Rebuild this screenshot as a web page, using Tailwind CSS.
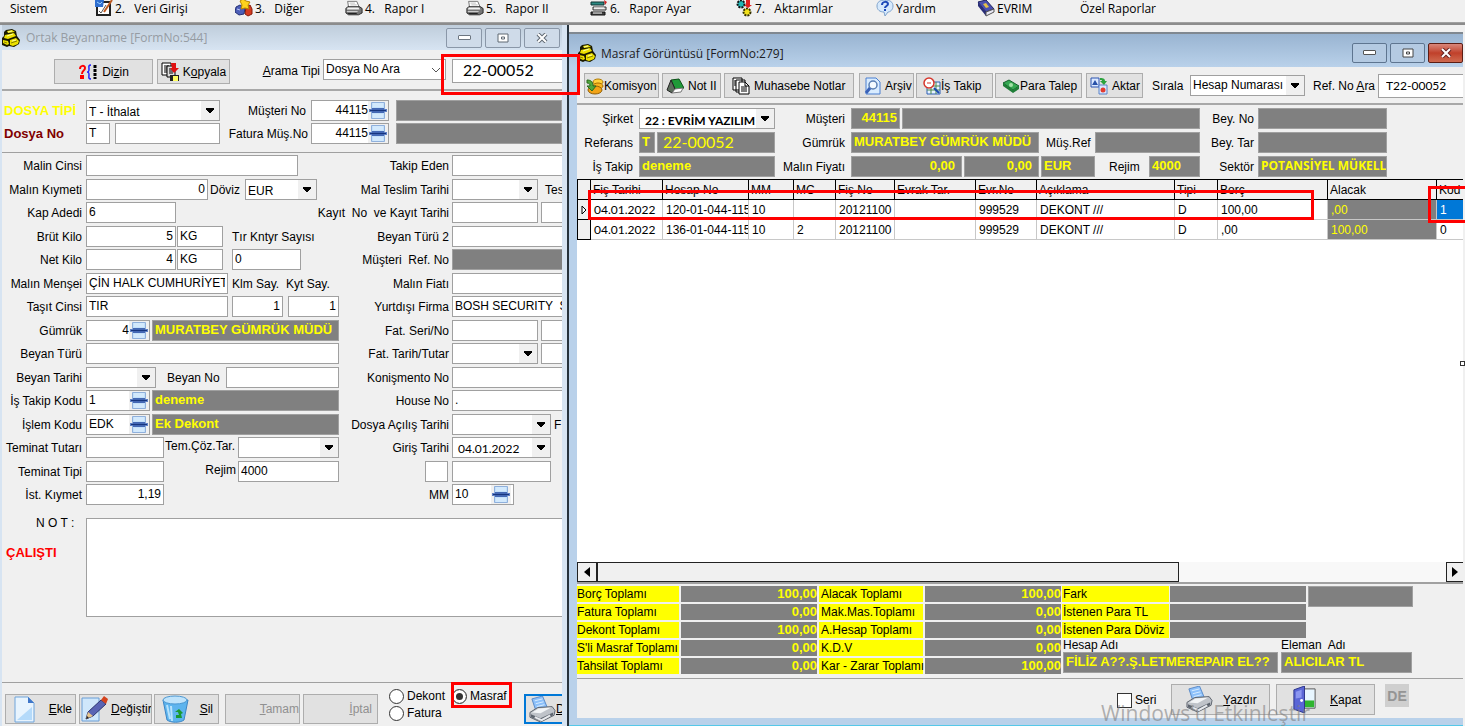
<!DOCTYPE html>
<html lang="tr">
<head>
    <meta charset="UTF-8">
    <meta name="viewport" content="width=device-width, initial-scale=1.0">
    <title>Masraf Görüntüsü</title>
    <script src="https://cdn.jsdelivr.net/npm/@tailwindcss/browser@4"></script>
</head>
<!-- fld: white box, dk: grey read-only box, btn: flat button, row: form line -->
<body class="relative flex h-screen flex-col overflow-hidden bg-[#f0f0f0] font-['Liberation_Sans',Arial,sans-serif] text-xs whitespace-nowrap text-black
    [&_.fld]:h-[21px] [&_.fld]:shrink-0 [&_.fld]:border [&_.fld]:border-[#a0a0a0] [&_.fld]:bg-white [&_input.fld]:px-[2px] [&_input.fld]:pb-[2px]
    [&_.dk]:h-[21px] [&_.dk]:min-w-0 [&_.dk]:border [&_.dk]:border-[#a0a0a0] [&_.dk]:bg-[#808080] [&_.dk]:px-[2px] [&_.dk]:pb-[2px] [&_.dk]:text-[13px] [&_.dk]:font-bold [&_.dk]:text-[#ffff00]
    [&_.btn]:flex [&_.btn]:shrink-0 [&_.btn]:items-center [&_.btn]:overflow-hidden [&_.btn]:border [&_.btn]:border-[#adadad] [&_.btn]:bg-[#e1e1e1]
    [&_.row]:flex [&_.row]:h-[24px] [&_.row]:items-start [&_.row]:leading-[22px] [&_.row:nth-child(even)]:h-[23px]
    [&_select]:min-w-0 [&_select]:flex-1 [&_select]:appearance-none [&_select]:pb-[2px] [&_select]:pl-[2px] [&_select]:outline-none">

    <svg class="hidden">
        <symbol id="arrow" viewBox="0 0 18 19"><path d="M0 0h18v19H0z" fill="#f0f0f0"/><path d="M5 7h8v2h-1v1h-1v1h-1v1H8v-1H7v-1H6V9H5z" fill="#000"/></symbol>
        <symbol id="spin" viewBox="0 0 20 19"><path d="M0 0h20v19H0z" fill="#f0f0f0"/><path d="M3.500 1.500h13v16h-13z" fill="#c3e0fa" stroke="#8fb0dc"/><path d="M5 3h10M5 5h10M5 14h10M5 16h10" stroke="#e2f2ff"/><path d="M1 8h18v3H1z" fill="#5f80c4"/><path d="M4 7h12v5H4z" fill="#4468b4"/><path d="M2 9h16v1H2z" fill="#16357e"/></symbol>
        <symbol id="app" viewBox="0 0 18 18"><path d="M4 1l6-1 4 2 1 5 3 4-1 4-5 3-5-1-2 1-5-2V9l2-2V3z" fill="#1a1a00"/><path d="M5 2l5-1 3 2-7 1zM3 6l9-2 2 3-8 3-4-1zM1 11l5 1 1 3-2 1-4-2zM8 11l6-2 3 3-1 3-5 2-3-1z" fill="#ece100"/><path d="M6 3l4-1M5 7l6-2M10 12l4-1" stroke="#ffff9a"/><path d="M9 14l6-2M2 13l3 1" stroke="#8a8200"/></symbol>
        <symbol id="printer" viewBox="0 0 20 18"><path d="M4 8L3 1h10l3 7z" fill="#fff" stroke="#666"/><path d="M5 3h6M6 5h7" stroke="#bbb"/><path d="M1 9l2-2h13l3 2v5l-4 2H4l-3-2z" fill="#777" stroke="#222"/><path d="M3 8h12l1 2H2z" fill="#f4f4f4"/><path d="M2 12h12v1H2z" fill="#e8e8e8"/><path d="M3 14h10v1H3z" fill="#222"/></symbol>
        <symbol id="bigprinter" viewBox="0 0 28 28"><path d="M7 15L3 3l11-3 5 12z" fill="#8cc0fa" stroke="#5b8ac8"/><path d="M6 5l8-2M7 8l8-2M8 11l8-2" stroke="#d8ecff"/><path d="M1 17l8-5 15-1 3 4-1 5-14 7L1 22z" fill="#bfc3c9" stroke="#5c626b"/><path d="M3 17l7-4 13-1-11 6z" fill="#f2f4f6"/><path d="M2 19l10 4 13-6v3l-13 6L2 22z" fill="#5e656f"/><path d="M6 22l7 3 9-5" stroke="#e8eaee" fill="none" stroke-width="2"/></symbol>
    </svg>

    <!-- Main menu -->
    <nav class="flex h-[23px] shrink-0 border-b border-[#a0a0a0] pl-[10px] font-['Open_Sans','Noto_Sans',sans-serif] leading-[18px] [&_a]:flex [&_a]:shrink-0 [&_a]:gap-[2px] [&_pre]:font-[inherit] [&_svg]:h-[17px] [&_svg]:w-[18px] [&_svg]:shrink-0">
        <a href="#" class="w-[85px]">Sistem</a>
        <a href="#" class="w-[140px]"><svg viewBox="0 0 18 17"><path d="M2 2h13v13H2z" fill="#fff" stroke="#222" stroke-width="2"/><path d="M0 0h9l-1 7H0z" fill="#2f6fd0"/><path d="M2 2l3 2 2-2" stroke="#9ad0ff" fill="none"/><path d="M4 11l2 2 5-8" stroke="#555" fill="none"/><path d="M17 0L9 12" stroke="#c05a20" stroke-width="2"/></svg><pre>2.   Veri Girişi</pre></a>
        <a href="#" class="w-[110px]"><svg viewBox="0 0 18 17"><path d="M1 7l4-2 5 3-1 6-5 1-4-3z" fill="#4d5fb8" stroke="#232f75"/><path d="M11 7l4-2 2 4v5l-4 2-3-2z" fill="#d63b20" stroke="#861a0a"/><path d="M5 1l3-2 3 2 4 1-2 3 1 4-4-1-4 1 1-4z" fill="#ffd21c" stroke="#b98500"/><path d="M2 9l3 1" stroke="#b9c4f5"/></svg><pre>3.   Diğer</pre></a>
        <a href="#" class="w-[121px]"><svg viewBox="0 0 20 18"><use href="#printer"/></svg><pre>4.   Rapor I</pre></a>
        <a href="#" class="w-[124px]"><svg viewBox="0 0 20 18"><use href="#printer"/></svg><pre>5.   Rapor II</pre></a>
        <a href="#" class="w-[145px]"><svg viewBox="0 0 18 17"><path d="M1 2h13v3H1z" fill="#2c8a83" stroke="#133"/><path d="M3 7h13v3H3z" fill="#ddd" stroke="#333"/><path d="M1 12h14v3H1z" fill="#444" stroke="#111"/><path d="M14 0l3 2-2 3" fill="#c22"/><path d="M4 8h10M3 13h9" stroke="#fff"/></svg><pre>6.   Rapor Ayar</pre></a>
        <a href="#" class="w-[141px]"><svg viewBox="0 0 18 17"><circle cx="6" cy="4" r="3.500" fill="#22b5b5" stroke="#111" stroke-dasharray="2 1" stroke-width="2"/><circle cx="12" cy="12" r="3.500" fill="#f2e11b" stroke="#332f00" stroke-dasharray="2 1" stroke-width="2"/><path d="M11 0h4v5h2l-4 3-4-3h2z" fill="#e02020"/></svg><pre>7.   Aktarımlar</pre></a>
        <a href="#" class="w-[101px]"><svg viewBox="0 0 18 17"><path d="M9 0c5 0 8 2 8 6s-3 6-5 6l-3 4-1-4C4 12 1 10 1 6s3-6 8-6z" fill="#d6e9fc" stroke="#7fa3cc"/><path d="M6 5c0-4 6-4 6-1 0 2-3 2-3 4" stroke="#1c49b8" stroke-width="2" fill="none"/><path d="M8 9h2v2H8z" fill="#1c49b8"/></svg>Yardım</a>
        <a href="#" class="w-[103px]"><svg viewBox="0 0 18 17"><path d="M1 2l8-2 8 9-8 3z" fill="#4a50b0" stroke="#20245e"/><path d="M1 2l8 10v4L1 6z" fill="#292e78"/><path d="M9 12l8-3v3l-8 4z" fill="#e8e8f4" stroke="#555"/><path d="M6 4l3-1 3 4-3 1z" fill="#e3c04a"/></svg>EVRIM</a>
        <a href="#">Özel Raporlar</a>
    </nav>

    <main class="flex min-h-0 flex-1 border-t-2 border-[#8c8c8c]">
        <!-- Ortak Beyanname -->
        <section class="flex w-[569px] shrink-0 flex-col border-r-2 border-[#26323c] bg-[#d7e4f2] pr-[5px] pl-[2px]">
            <header class="flex h-[25px] shrink-0 items-center gap-[3px] bg-linear-to-b from-[#bfcddb] to-[#d7e4f2]">
                <svg class="size-[18px]"><use href="#app"/></svg>
                <h1 class="flex-1 pl-[3px] font-['Open_Sans','Noto_Sans',sans-serif] text-[#969ca3]">Ortak Beyanname [FormNo:544]</h1>
                <button aria-label="Simge durumuna küçült" class="grid h-[20px] w-[36px] place-items-center rounded-[2px] border border-[#8a97a8] bg-[#cfdbe9]"><span class="h-[5px] w-[13px] rounded-[1px] border border-[#6d7681] bg-white"></span></button>
                <button aria-label="Ekranı kapla" class="grid h-[20px] w-[36px] place-items-center rounded-[2px] border border-[#8a97a8] bg-[#cfdbe9]"><svg class="h-[10px] w-[12px]" viewBox="0 0 12 10"><path d="M1 1h10v8H1z" fill="#fff" stroke="#5f6873"/><path d="M4.500 4h3v2h-3z" fill="#fff" stroke="#5f6873"/></svg></button>
                <button aria-label="Kapat" class="mr-[2px] grid h-[20px] w-[36px] place-items-center rounded-[2px] border border-[#8a97a8] bg-[#cfdbe9]"><svg class="h-[10px] w-[12px]" viewBox="0 0 12 10"><path d="M2 1l8 8M10 1L2 9" stroke="#5f6873" stroke-width="4"/><path d="M2 1l8 8M10 1L2 9" stroke="#fff" stroke-width="2"/></svg></button>
            </header>

            <div class="flex h-[41px] shrink-0 items-start border-b-2 border-[#a8a8a8] bg-[#f0f0f0] pt-[9px] pl-[52px]">
                <button class="btn mr-1 h-[25px] w-[99px] justify-center gap-1"><svg class="h-[16px] w-[20px]" viewBox="0 0 20 16"><path d="M2 5c0-4 5-4 5-1 0 3-3 2-3 6M3 12h2v2H3z" fill="none" stroke="#f00" stroke-width="2"/><path d="M13 1c-3 0-2 2-2 4s0 3-2 3c2 0 2 1 2 3s-1 4 2 4" fill="none" stroke="#22f" stroke-width="1.500"/><path d="M17 1v14" stroke="#000" stroke-width="3" stroke-dasharray="3 1"/></svg><span>Di<u>z</u>in</span></button>
                <button class="btn h-[25px] w-[73px] justify-center gap-[2px]"><svg class="size-[20px] shrink-0" viewBox="0 0 20 20"><path d="M1 1h9v12H1z" fill="#fff" stroke="#000"/><path d="M3 4h5M3 6h5M3 8h5M3 10h5" stroke="#000"/><path d="M6 4h8v11H6z" fill="#ddd" stroke="#000"/><path d="M8 7h4M8 9h4M8 11h4" stroke="#000"/><path d="M10 1h5v5h3l-5 5-4-5h2z" fill="#e01010"/><path d="M9 13h9v6H9z" fill="#222"/><path d="M12 14h5v5h-5z" fill="#ffff60"/></svg><span>K<u>o</u>pyala</span></button>
                <label for="arama" class="w-[90px] text-right leading-6"><u>A</u>rama Tipi</label>
                <span class="fld ml-[3px] flex w-[123px]"><select id="arama"><option>Dosya No Ara</option></select><svg class="h-[19px] w-[18px]" viewBox="0 0 18 19"><path d="M5 8l4 4 4-4" fill="none" stroke="#555"/></svg></span>
                <input aria-label="Dosya No" value="22-00052" class="ml-[6px] h-[24px] min-w-0 flex-1 border border-r-0 border-[#a0a0a0] bg-white pb-[3px] pl-[10px] font-['Lato',sans-serif] text-[16px]">
            </div>

            <div class="flex h-[62px] shrink-0 flex-col gap-[2px] border-b border-[#a0a0a0] bg-[#f0f0f0] pt-[9px] [&>div]:flex [&>div]:h-[21px] [&>div]:leading-[22px]">
                <div>
                    <label for="dosyatipi" class="w-[84px] pl-[2px] text-[13px] font-bold text-[#ffff00]">DOSYA TİPİ</label>
                    <span class="fld flex w-[134px]"><select id="dosyatipi"><option>T - İthalat</option></select><svg class="h-[19px] w-[18px]"><use href="#arrow"/></svg></span>
                    <label for="musterino" class="mr-[5px] w-[86px] text-right">Müşteri No</label>
                    <span class="fld flex w-[78px]"><input id="musterino" value="44115" class="min-w-0 flex-1 pb-[2px] text-right"><svg class="h-[19px] w-[20px] shrink-0"><use href="#spin"/></svg></span>
                    <input aria-label="Müşteri adı" readonly class="dk ml-[7px] flex-1">
                </div>
                <div>
                    <label for="dosyano" class="w-[84px] pl-[2px] text-[13px] font-bold text-[#800000]">Dosya No</label>
                    <input id="dosyano" value="T" class="fld w-[24px]">
                    <input aria-label="Dosya numarası" class="fld ml-[5px] w-[105px]">
                    <label for="faturamus" class="mr-[3px] w-[88px] text-right">Fatura Müş.No</label>
                    <span class="fld flex w-[78px]"><input id="faturamus" value="44115" class="min-w-0 flex-1 pb-[2px] text-right"><svg class="h-[19px] w-[20px] shrink-0"><use href="#spin"/></svg></span>
                    <input aria-label="Fatura müşteri adı" readonly class="dk ml-[7px] flex-1">
                </div>
            </div>

            <div class="flex shrink-0 overflow-hidden bg-[#f0f0f0] pt-[2px]">
                <div class="w-[338px] shrink-0 [&_.row>label:first-child]:mr-1 [&_.row>label:first-child]:w-[80px] [&_.row>label:first-child]:shrink-0 [&_.row>label:first-child]:text-right">
                    <div class="row"><label for="f1">Malin Cinsi</label><input id="f1" class="fld w-[212px]"></div>
                    <div class="row"><label for="f2">Malın Kıymeti</label><input id="f2" value="0" class="fld w-[122px] text-right"><label for="doviz" class="w-[37px] pl-[2px]">Döviz</label><span class="fld flex w-[72px]"><select id="doviz"><option>EUR</option></select><svg class="h-[19px] w-[18px]"><use href="#arrow"/></svg></span></div>
                    <div class="row"><label for="f3">Kap Adedi</label><input id="f3" value="6" class="fld w-[90px]"></div>
                    <div class="row"><label for="f4">Brüt Kilo</label><input id="f4" value="5" class="fld w-[90px] text-right"><input aria-label="Brüt birim" value="KG" class="fld ml-px w-[46px]"><label for="kntyr" class="ml-[9px]">Tır Kntyr Sayısı</label></div>
                    <div class="row"><label for="f5">Net Kilo</label><input id="f5" value="4" class="fld w-[90px] text-right"><input aria-label="Net birim" value="KG" class="fld ml-px w-[46px]"><input id="kntyr" value="0" class="fld ml-[9px] w-[69px]"></div>
                    <div class="row"><label for="f6">Malın Menşei</label><input id="f6" value="ÇİN HALK CUMHURİYET" class="fld w-[142px]"><label for="klm" class="ml-1 w-[54px]">Klm Say.</label><label for="kyt">Kyt Say.</label></div>
                    <div class="row"><label for="f7">Taşıt Cinsi</label><input id="f7" value="TIR" class="fld w-[142px]"><input id="klm" value="1" class="fld ml-1 w-[51px] text-right"><input id="kyt" value="1" class="fld ml-[5px] w-[51px] text-right"></div>
                    <div class="row"><label for="f8">Gümrük</label><span class="fld flex w-[64px]"><input id="f8" value="4" class="min-w-0 flex-1 pb-[2px] text-right"><svg class="h-[19px] w-[20px] shrink-0"><use href="#spin"/></svg></span><input aria-label="Gümrük adı" readonly value="MURATBEY GÜMRÜK MÜDÜ" class="dk ml-[2px] w-[187px]"></div>
                    <div class="row"><label for="f9">Beyan Türü</label><input id="f9" class="fld w-[253px]"></div>
                    <div class="row"><label for="f10">Beyan Tarihi</label><span class="fld flex w-[70px]"><select id="f10"><option></option></select><svg class="h-[19px] w-[18px]"><use href="#arrow"/></svg></span><label for="beyanno" class="w-[70px] pl-[11px]">Beyan No</label><input id="beyanno" class="fld w-[113px]"></div>
                    <div class="row"><label for="f11">İş Takip Kodu</label><span class="fld flex w-[64px]"><input id="f11" value="1" class="min-w-0 flex-1 pb-[2px] pl-[2px]"><svg class="h-[19px] w-[20px] shrink-0"><use href="#spin"/></svg></span><input aria-label="İş takip adı" readonly value="deneme" class="dk ml-[2px] w-[187px]"></div>
                    <div class="row"><label for="f12">İşlem Kodu</label><span class="fld flex w-[64px]"><input id="f12" value="EDK" class="min-w-0 flex-1 pb-[2px] pl-[2px]"><svg class="h-[19px] w-[20px] shrink-0"><use href="#spin"/></svg></span><input aria-label="İşlem adı" readonly value="Ek Dekont" class="dk ml-[2px] w-[187px]"></div>
                    <div class="row"><label for="f13">Teminat Tutarı</label><input id="f13" class="fld w-[78px]"><label for="temcoz" class="w-[74px] pl-px leading-[18px]">Tem.Çöz.Tar.</label><span class="fld flex w-[101px]"><select id="temcoz"><option></option></select><svg class="h-[19px] w-[18px]"><use href="#arrow"/></svg></span></div>
                    <div class="row"><label for="f14">Teminat Tipi</label><input id="f14" class="fld w-[78px]"><label for="rejim" class="w-[74px] pr-[2px] text-right leading-[18px]">Rejim</label><input id="rejim" value="4000" class="fld w-[101px]"></div>
                    <div class="row"><label for="f15">İst. Kıymet</label><input id="f15" value="1,19" class="fld w-[78px] text-right"></div>
                </div>

                <div class="min-w-0 flex-1 [&_.row>label:first-child]:mr-[3px] [&_.row>label:first-child]:flex [&_.row>label:first-child]:w-[109px] [&_.row>label:first-child]:shrink-0 [&_.row>label:first-child]:justify-end">
                    <div class="row"><label for="g1">Takip Eden</label><input id="g1" class="fld w-[140px]"></div>
                    <div class="row"><label for="g2">Mal Teslim Tarihi</label><span class="fld flex w-[86px]"><select id="g2"><option></option></select><svg class="h-[19px] w-[18px]"><use href="#arrow"/></svg></span><span class="ml-[7px]">Tes</span></div>
                    <div class="row"><label for="g3"><span class="whitespace-pre">Kayıt  No  ve Kayıt Tarihi</span></label><input id="g3" class="fld w-[86px]"><input aria-label="Kayıt tarihi" class="fld ml-[3px] w-[60px]"></div>
                    <div class="row"><label for="g4">Beyan Türü 2</label><input id="g4" class="fld w-[140px]"></div>
                    <div class="row"><label for="g5"><span class="whitespace-pre">Müşteri  Ref. No</span></label><input id="g5" readonly class="dk w-[140px] shrink-0"></div>
                    <div class="row"><label for="g6">Malın Fiatı</label><input id="g6" class="fld w-[140px]"></div>
                    <div class="row"><label for="g7">Yurtdışı Firma</label><input id="g7" value="BOSH SECURITY  SYSTEMS" class="fld w-[140px]"></div>
                    <div class="row"><label for="g8">Fat. Seri/No</label><input id="g8" class="fld w-[86px]"><input aria-label="Fatura no" class="fld ml-[3px] w-[60px]"></div>
                    <div class="row"><label for="g9">Fat. Tarih/Tutar</label><span class="fld flex w-[86px]"><select id="g9"><option></option></select><svg class="h-[19px] w-[18px]"><use href="#arrow"/></svg></span><input aria-label="Fatura tutarı" class="fld ml-[3px] w-[60px]"></div>
                    <div class="row"><label for="g10">Konişmento No</label><input id="g10" class="fld w-[140px]"></div>
                    <div class="row"><label for="g11">House No</label><input id="g11" value="." class="fld w-[140px]"></div>
                    <div class="row"><label for="g12">Dosya Açılış Tarihi</label><span class="fld flex w-[99px]"><select id="g12"><option></option></select><svg class="h-[19px] w-[18px]"><use href="#arrow"/></svg></span><span class="ml-[3px]">F</span></div>
                    <div class="row"><label for="g13">Giriş Tarihi</label><span class="fld flex w-[99px]"><select id="g13" class="font-['Lato',sans-serif]"><option>&nbsp;04.01.2022</option></select><svg class="h-[19px] w-[18px]"><use href="#arrow"/></svg></span></div>
                    <div class="row pl-[85px]"><input aria-label="Kod" class="fld mr-1 w-[23px]"><input aria-label="Açıklama" class="fld w-[99px]"></div>
                    <div class="row"><label for="g15">MM</label><span class="fld flex w-[62px]"><input id="g15" value="10" class="min-w-0 flex-1 pb-[2px] pl-[2px]"><svg class="mr-[2px] h-[19px] w-[20px] shrink-0"><use href="#spin"/></svg></span></div>
                </div>
            </div>

            <div class="flex flex-1 items-start bg-[#f0f0f0] pt-[10px]">
                <div class="w-[84px] shrink-0">
                    <label for="not" class="block pl-[34px] leading-[10px]">N O T :</label>
                    <p class="pt-[16px] pl-1 text-[13px] font-bold text-[#ff0000]">ÇALIŞTI</p>
                </div>
                <textarea id="not" class="h-[99px] min-w-0 flex-1 resize-none border border-r-0 border-[#a0a0a0] bg-white"></textarea>
            </div>

            <footer class="flex h-[44px] shrink-0 items-start overflow-hidden border-t border-[#a0a0a0] bg-[#f0f0f0] pt-[11px] pl-[3px]">
                <button class="btn mr-[3px] h-[30px] w-[71px] justify-between pr-[3px] pl-[4px]"><svg class="size-[28px]" viewBox="0 0 28 28"><path d="M5 2h13l6 6v19H5z" fill="#e8f4fe" stroke="#6fa4da"/><path d="M18 2l6 6h-6z" fill="#3f76c8"/><path d="M7 25l15-13v13z" fill="#b4dafa"/></svg><span><u>E</u>kle</span></button>
                <button class="btn mr-[2px] h-[30px] w-[73px] gap-[2px] pl-px"><svg class="size-[28px] shrink-0" viewBox="0 0 28 28"><path d="M1 3h17v23H1z" fill="#cfe7fb" stroke="#6a9ed6"/><path d="M5 24l2-7L20 5l5 4-13 12z" fill="#5964b4" stroke="#2c3470"/><path d="M20 5l3-4 4 3-2 5z" fill="#d4431e"/><path d="M5 24l2-7 5 4z" fill="#e8c58a"/><path d="M5 24l1-3 2 2z" fill="#222"/></svg><span><u>D</u>eğiştir</span></button>
                <button class="btn mr-[6px] h-[30px] w-[65px] justify-between pr-[5px] pl-[6px]"><svg class="size-[28px]" viewBox="0 0 28 28"><path d="M2 5l4 20c4 3 13 3 17 0l4-20z" fill="#5db4ee" stroke="#3d85c4"/><ellipse cx="14" cy="5" rx="12" ry="4" fill="#bfe3fb" stroke="#4c98d2"/><path d="M6 10l3 14M10 11l1 15" stroke="#b7e2fc" stroke-width="2"/><path d="M14 17l4-3 4 4-2 1 1 4h-6v-3h3l-1-3z" fill="#199a32"/></svg><span><u>S</u>il</span></button>
                <button disabled class="btn mr-[3px] h-[30px] w-[75px] justify-end border-[#c4c4c4] bg-[#cccccc] text-[#909090]"><span><u>T</u>amam</span></button>
                <button disabled class="btn h-[30px] w-[75px] justify-end border-[#c4c4c4] bg-[#cccccc] pr-[5px] text-[#909090]"><span><u>İ</u>ptal</span></button>
                <div class="-mt-[6px] ml-[11px] grid grid-cols-[63px_60px] leading-[17px] [&_input]:size-[15px] [&_input]:shrink-0 [&_input]:appearance-none [&_input]:rounded-full [&_input]:border [&_input]:border-[#333] [&_input]:bg-white [&_label]:flex [&_label]:items-center [&_label]:gap-[3px]">
                    <label><input type="radio" name="tur">Dekont</label>
                    <label><input type="radio" name="tur" checked class="checked:shadow-[inset_0_0_0_3px_white,inset_0_0_0_8px_#333]">Masraf</label>
                    <label><input type="radio" name="tur">Fatura</label>
                </div>
                <button aria-label="Yazdır" class="ml-[12px] flex h-[30px] w-[60px] shrink-0 items-center border-2 border-[#0078d7] bg-[#e1e1e1] pl-[3px]"><svg class="size-[27px] shrink-0" viewBox="0 0 28 28"><use href="#bigprinter"/></svg><u>D</u></button>
            </footer>
        </section>

        <!-- Masraf Görüntüsü -->
        <section class="mr-[2px] flex min-w-0 flex-1 flex-col pt-[7px]">
            <header class="flex h-[35px] shrink-0 items-center gap-[3px] border-t-2 border-[#808890] bg-linear-to-b from-[#99b4d1] to-[#b9d1ea] pt-[4px] pl-[9px]">
                <svg class="size-[18px]"><use href="#app"/></svg>
                <h2 class="flex-1 pt-[2px] pl-[2px] font-['Open_Sans','Noto_Sans',sans-serif] text-[#1c1c24]">Masraf Görüntüsü [FormNo:279]</h2>
                <button aria-label="Simge durumuna küçült" class="grid h-[20px] w-[35px] place-items-center rounded-[2px] border border-[#5e7590] bg-[#b4cae2]"><span class="h-[5px] w-[13px] rounded-[1px] border border-[#555] bg-white"></span></button>
                <button aria-label="Ekranı kapla" class="grid h-[20px] w-[35px] place-items-center rounded-[2px] border border-[#5e7590] bg-[#b4cae2]"><svg class="h-[10px] w-[12px]" viewBox="0 0 12 10"><path d="M1 1h10v8H1z" fill="#fff" stroke="#444"/><path d="M4.500 4h3v2h-3z" fill="#fff" stroke="#444"/></svg></button>
                <button aria-label="Kapat" class="grid h-[20px] w-[35px] place-items-center rounded-[2px] border border-[#5c1d14] bg-linear-to-b from-[#d9867a] via-[#c0402a] to-[#cf6a50]"><svg class="h-[10px] w-[12px]" viewBox="0 0 12 10"><path d="M2 1l8 8M10 1L2 9" stroke="#622" stroke-width="4"/><path d="M2 1l8 8M10 1L2 9" stroke="#fff" stroke-width="2"/></svg></button>
            </header>

            <div class="flex min-h-0 flex-1 flex-col border-b-[7px] border-l-[8px] border-[#b9d1ea] bg-[#f0f0f0]">
                <div class="flex h-[38px] shrink-0 items-start border-b-2 border-[#a8a8a8] pt-[6px] pl-[7px] [&_.btn]:h-[25px] [&_.btn_svg]:size-[18px] [&_.btn_svg]:shrink-0">
                    <button class="btn mr-[3px] w-[75px] pl-px"><svg viewBox="0 0 18 18"><ellipse cx="12" cy="5" rx="5" ry="3" fill="#ffd23a" stroke="#b27b05"/><ellipse cx="12" cy="9" rx="5" ry="3" fill="#f9b51f" stroke="#a96c00"/><ellipse cx="9" cy="13" rx="7" ry="4" fill="#f2a316" stroke="#8f5d05"/><path d="M1 3c3 0 6 1 6 6h3l-4 5-5-5h3c0-2-1-3-3-3z" fill="#4fa83d" stroke="#2d6a1e"/></svg>Komisyon</button>
                    <button class="btn mr-[3px] w-[59px] gap-1 pl-[3px]"><svg viewBox="0 0 18 18"><path d="M5 3l8-1 5 9-9 1z" fill="#1f9a38" stroke="#0c4f18"/><path d="M5 3L1 13l5 3 3-4z" fill="#5d6d5d" stroke="#222"/><path d="M6 16l3-4 8-1-2 4z" fill="#fff" stroke="#777"/></svg>Not II</button>
                    <button class="btn mr-[5px] w-[130px] gap-1 pl-[7px]"><svg viewBox="0 0 18 18"><path d="M1 1h9v12H1zM4 3h9v12H4z" fill="#fff" stroke="#000"/><path d="M7 5h6l4 4v8H7z" fill="#fff" stroke="#000"/><path d="M9 10h6M9 12h6M9 14h6M13 5v4h4M2 4h2M2 6h2M2 8h2" stroke="#000" fill="none"/></svg>Muhasebe Notlar</button>
                    <button class="btn mr-[2px] w-[55px] gap-[3px] pl-1"><svg viewBox="0 0 18 18"><path d="M2 1h10l4 4v12H2z" fill="#d9ecff" stroke="#4a7fd0"/><circle cx="9" cy="8" r="4" fill="#f4faff" stroke="#5a7fb4" stroke-width="1.500"/><path d="M6 11l-4 5" stroke="#3a62b8" stroke-width="3"/></svg>Arşiv</button>
                    <button class="btn mr-[2px] w-[77px] pl-[6px]"><svg viewBox="0 0 18 18"><path d="M4 5h13v12H4z" fill="#e6f2ff" stroke="#2d5fb5"/><path d="M8 5v12M13 5v12M4 9h13M4 13h13" stroke="#4d8b4a"/><circle cx="6" cy="6" r="5" fill="#fff" stroke="#d6352b" stroke-width="1.500"/><path d="M4 6h4" stroke="#d6352b"/><path d="M11 11l5 5" stroke="#1949b0" stroke-width="2"/></svg>İş Takip</button>
                    <button class="btn mr-[4px] w-[87px] pl-[6px]"><svg viewBox="0 0 18 18"><path d="M1 6l6-3 10 6-6 4z" fill="#35a852" stroke="#14602a"/><path d="M1 6v3l10 7v-3zM11 13l6-4v3l-6 4z" fill="#1f7e38"/><circle cx="9" cy="8" r="2" fill="#a4e0a8"/></svg>Para Talep</button>
                    <button class="btn w-[57px] gap-1 pl-[3px]"><svg viewBox="0 0 18 18"><path d="M1 1h8v9H1z" fill="#dbe8ff" stroke="#2d55b0"/><path d="M2 8l3-5 3 5z" fill="#2851a8"/><path d="M9 8h8v9H9z" fill="#dbe8ff" stroke="#5a82c8"/><circle cx="13" cy="13" r="2.500" fill="#e23b30"/><path d="M10 1c4 0 5 1 5 3h2l-3 4-4-4h2c0-1 0-1-2-1z" fill="#2ca33e"/></svg>Aktar</button>
                    <label for="sirala" class="w-[47px] pl-[9px] leading-[27px]">Sırala</label>
                    <span class="fld mt-[2px] flex w-[115px]"><select id="sirala"><option>Hesap Numarası</option></select><svg class="h-[19px] w-[18px]"><use href="#arrow"/></svg></span>
                    <label for="refara" class="w-[73px] shrink-0 pl-2 leading-[27px]">Ref. No <u>A</u>ra</label>
                    <input id="refara" value="T22-00052" class="mt-px h-[24px] min-w-0 flex-1 border border-r-0 border-[#a0a0a0] bg-white pb-[2px] pl-[7px] font-['Lato',sans-serif] text-xs">
                </div>

                <div class="flex h-[74px] shrink-0 flex-col gap-[3px] pt-[3px] leading-[23px] [&>div]:flex [&>div]:h-[21px] [&>div>label]:shrink-0 [&>div>label]:text-right">
                    <div>
                        <label for="sirket" class="mr-[6px] w-[56px]">Şirket</label>
                        <span class="fld flex w-[136px]"><select id="sirket" class="font-['Lato',sans-serif] font-bold"><option>&nbsp;22 : EVRİM YAZILIM</option></select><svg class="h-[19px] w-[18px]"><use href="#arrow"/></svg></span>
                        <label for="musteri" class="mr-[6px] w-[70px]">Müşteri</label>
                        <span class="flex w-[349px] shrink-0 gap-[2px]"><input id="musteri" readonly value="44115" class="dk w-[49px] text-right"><input aria-label="Müşteri adı" readonly class="dk flex-1"></span>
                        <label for="beyno2" class="mr-1 w-[54px]">Bey. No</label>
                        <input id="beyno2" readonly class="dk w-[129px]">
                    </div>
                    <div>
                        <label for="referans" class="mr-[6px] w-[56px]">Referans</label>
                        <span class="flex w-[136px] shrink-0 gap-[2px]"><input id="referans" readonly value="T" class="dk w-[16px]"><span class="dk flex-1"><output class="block pl-[3px] font-['Lato',sans-serif] text-[16px] leading-[17px] font-normal">22-00052</output></span></span>
                        <label for="gumruk2" class="mr-[6px] w-[70px]">Gümrük</label>
                        <span class="flex w-[349px] shrink-0"><input id="gumruk2" readonly value="MURATBEY GÜMRÜK MÜDÜ" class="dk w-[188px]"><label for="musref" class="w-[56px] pl-[7px]">Müş.Ref</label><input id="musref" readonly class="dk flex-1"></span>
                        <label for="beytar" class="mr-1 w-[54px]">Bey. Tar</label>
                        <input id="beytar" readonly class="dk w-[129px]">
                    </div>
                    <div>
                        <label for="istakip" class="mr-[6px] w-[56px]">İş Takip</label>
                        <input id="istakip" readonly value="deneme" class="dk w-[136px] shrink-0">
                        <label for="fiyat" class="mr-[6px] w-[70px]">Malın Fiyatı</label>
                        <span class="flex w-[349px] shrink-0"><span class="dk w-[111px] shrink-0 text-right leading-[18px]"><output id="fiyat" class="pr-1">0,00</output></span><span class="dk mx-[2px] w-[75px] shrink-0 text-right leading-[18px]"><output class="pr-1">0,00</output></span><input aria-label="Döviz" readonly value="EUR" class="dk w-[54px] shrink-0"><label for="rejim2" class="w-[54px] pl-[14px]">Rejim</label><input id="rejim2" readonly value="4000" class="dk flex-1"></span>
                        <label for="sektor" class="mr-1 w-[54px]">Sektör</label>
                        <span class="dk w-[129px] overflow-hidden"><output id="sektor" class="block font-['Open_Sans','Noto_Sans',sans-serif] text-xs leading-[18px]">POTANSİYEL MÜKELL</output></span>
                    </div>
                </div>

                <div class="min-h-0 flex-1 overflow-hidden bg-white">
                    <table class="w-[920px] table-fixed border-collapse border border-[#000] text-left [&_td]:h-[20px] [&_td]:overflow-hidden [&_td]:border-r [&_td]:border-b [&_td]:border-[#c8c8c8] [&_td]:p-0 [&_td]:pl-[3px] [&_th]:h-[20px] [&_th]:overflow-hidden [&_th]:border [&_th]:border-[#000] [&_th]:bg-[#f0f0f0] [&_th]:p-0 [&_th]:pl-[2px] [&_th]:font-normal">
                        <colgroup><col class="w-[13px]"><col class="w-[72px]"><col class="w-[86px]"><col class="w-[45px]"><col class="w-[42px]"><col class="w-[59px]"><col class="w-[81px]"><col class="w-[61px]"><col class="w-[138px]"><col class="w-[43px]"><col class="w-[110px]"><col class="w-[109px]"><col></colgroup>
                        <thead>
                            <tr><th></th><th>Fiş Tarihi</th><th>Hesap No</th><th>MM</th><th>MC</th><th>Fiş No</th><th>Evrak Tar.</th><th>Evr.No</th><th>Açıklama</th><th>Tipi</th><th>Borç</th><th>Alacak</th><th>Kod</th></tr>
                        </thead>
                        <tbody>
                            <tr><th scope="row"><svg class="h-[12px] w-[8px]" viewBox="0 0 8 12"><path d="M2 2l4 4-4 4z" fill="#fff" stroke="#000"/></svg></th><td class="font-['Lato',sans-serif]">04.01.2022</td><td>120-01-044-115</td><td>10</td><td></td><td>20121100</td><td></td><td>999529</td><td>DEKONT ///</td><td>D</td><td>100,00</td><td class="bg-[#808080] text-[#ffff00]">,00</td><td class="bg-[#0078d7] text-white">1</td></tr>
                            <tr><th scope="row"></th><td class="font-['Lato',sans-serif]">04.01.2022</td><td>136-01-044-115</td><td>10</td><td>2</td><td>20121100</td><td></td><td>999529</td><td>DEKONT ///</td><td>D</td><td>,00</td><td class="bg-[#808080] text-[#ffff00]">100,00</td><td>0</td></tr>
                        </tbody>
                    </table>
                </div>

                <div class="flex h-[20px] shrink-0 bg-[#f8f8f8]">
                    <button aria-label="Sola kaydır" class="grid w-[19px] place-items-center border border-r-0 border-[#222] bg-[#f0f0f0]"><svg class="h-[10px] w-[6px]" viewBox="0 0 6 10"><path d="M6 0v10L0 5z"/></svg></button>
                    <div class="w-[583px] border border-l-2 border-[#222] bg-[#f0f0f0]"></div>
                    <div class="flex-1"></div>
                    <button aria-label="Sağa kaydır" class="grid w-[17px] place-items-center border border-r-0 border-[#222] bg-[#f0f0f0]"><svg class="h-[10px] w-[6px]" viewBox="0 0 6 10"><path d="M0 0v10l6-5z"/></svg></button>
                </div>

                <!-- Totals -->
                <div class="flex h-[96px] shrink-0 gap-px border-t-2 border-[#a0a0a0] pt-[2px] [&_dd]:bg-[#808080] [&_dd]:text-right [&_dd]:text-[13px] [&_dd]:font-bold [&_dd]:text-[#ffff00] [&_dl]:grid [&_dl]:auto-rows-[16px] [&_dl]:gap-y-[2px] [&_dl]:leading-4 [&_dt]:bg-[#ffff00]">
                    <dl class="grid-cols-[102px_136px_104px_136px] gap-x-[2px]">
                        <dt>Borç Toplamı</dt><dd>100,00</dd><dt class="pl-[2px]">Alacak Toplamı</dt><dd>100,00</dd>
                        <dt>Fatura Toplamı</dt><dd>0,00</dd><dt class="pl-[2px]">Mak.Mas.Toplamı</dt><dd>0,00</dd>
                        <dt>Dekont Toplamı</dt><dd>100,00</dd><dt class="pl-[2px]">A.Hesap Toplamı</dt><dd>0,00</dd>
                        <dt>S'li Masraf Toplamı</dt><dd>0,00</dd><dt class="pl-[2px]">K.D.V</dt><dd>0,00</dd>
                        <dt>Tahsilat Toplamı</dt><dd>0,00</dd><dt class="pl-[2px]">Kar - Zarar Toplamı</dt><dd>100,00</dd>
                    </dl>
                    <div>
                        <div class="flex gap-[2px]">
                            <dl class="grid-cols-[107px_136px] gap-x-px">
                                <dt class="pl-px">Fark</dt><dd></dd>
                                <dt class="pl-px">İstenen Para TL</dt><dd></dd>
                                <dt class="pl-px">İstenen Para Döviz</dt><dd></dd>
                            </dl>
                            <input aria-label="Fark döviz" readonly class="dk w-[105px]">
                        </div>
                        <div class="grid grid-cols-[215px_131px] gap-x-[3px] pl-px leading-[14px]">
                            <label for="hesapadi">Hesap Adı</label><label for="elemanadi" class="whitespace-pre">Eleman  Adı</label>
                            <input id="hesapadi" readonly value="FİLİZ A??.Ş.LETMEREPAIR EL??" class="dk"><input id="elemanadi" readonly value="ALICILAR TL" class="dk">
                        </div>
                    </div>
                </div>

                <footer class="flex h-[40px] shrink-0 items-start border-t border-[#a0a0a0] pt-[5px] pl-[540px]">
                    <label class="flex w-[54px] items-center gap-[3px] pt-[8px]"><input type="checkbox" class="size-[15px] appearance-none border border-[#333] bg-white">Seri</label>
                    <button class="btn mr-[6px] h-[31px] w-[99px] gap-[10px] pl-[14px]"><svg class="size-[27px] shrink-0" viewBox="0 0 28 28"><use href="#bigprinter"/></svg><span><u>Y</u>azdır</span></button>
                    <button class="btn mr-[10px] h-[31px] w-[99px] gap-[12px] pl-[14px]"><svg class="size-[27px] shrink-0" viewBox="0 0 28 28"><path d="M13 3h12v20H13z" fill="#e8f6ff" stroke="#555"/><path d="M14 15h10v7H14z" fill="#2fb52f"/><path d="M3 4l11-4v28L3 24z" fill="#5a66d6" stroke="#2c3488"/><path d="M5 6l6-2v8l-6 1z" fill="#8b96f0"/><circle cx="11" cy="15" r="1.500" fill="#fff"/></svg><span><u>K</u>apat</span></button>
                    <button disabled class="h-[23px] w-[24px] bg-[#cfcfcf] text-sm font-bold text-[#959595]">DE</button>
                </footer>
            </div>
            <div class="h-px shrink-0 bg-[#55c8e8]"></div>
        </section>
    </main>

    <!-- Red highlights and system watermark over the windows -->
    <div class="pointer-events-none absolute top-[54px] left-[441px] h-[41px] w-[139px] border-[3px] border-[#ff0000]"></div>
    <div class="pointer-events-none absolute top-[190px] left-[588px] h-[30px] w-[726px] border-[3px] border-[#ff0000]"></div>
    <div class="pointer-events-none absolute top-[186px] left-[1428px] h-[37px] w-[50px] border-[3px] border-[#ff0000]"></div>
    <div class="pointer-events-none absolute top-[682px] left-[451px] h-[26px] w-[61px] border-[3px] border-[#ff0000]"></div>
    <div class="pointer-events-none absolute top-[361px] right-0 size-[5px] border border-[#333] bg-white"></div>
    <p class="pointer-events-none absolute right-[155px] bottom-[-1px] font-['Open_Sans','Noto_Sans',sans-serif] text-[21px] leading-7 text-[#808080]/60">Windows'u Etkinleştir</p>
</body>
</html>
